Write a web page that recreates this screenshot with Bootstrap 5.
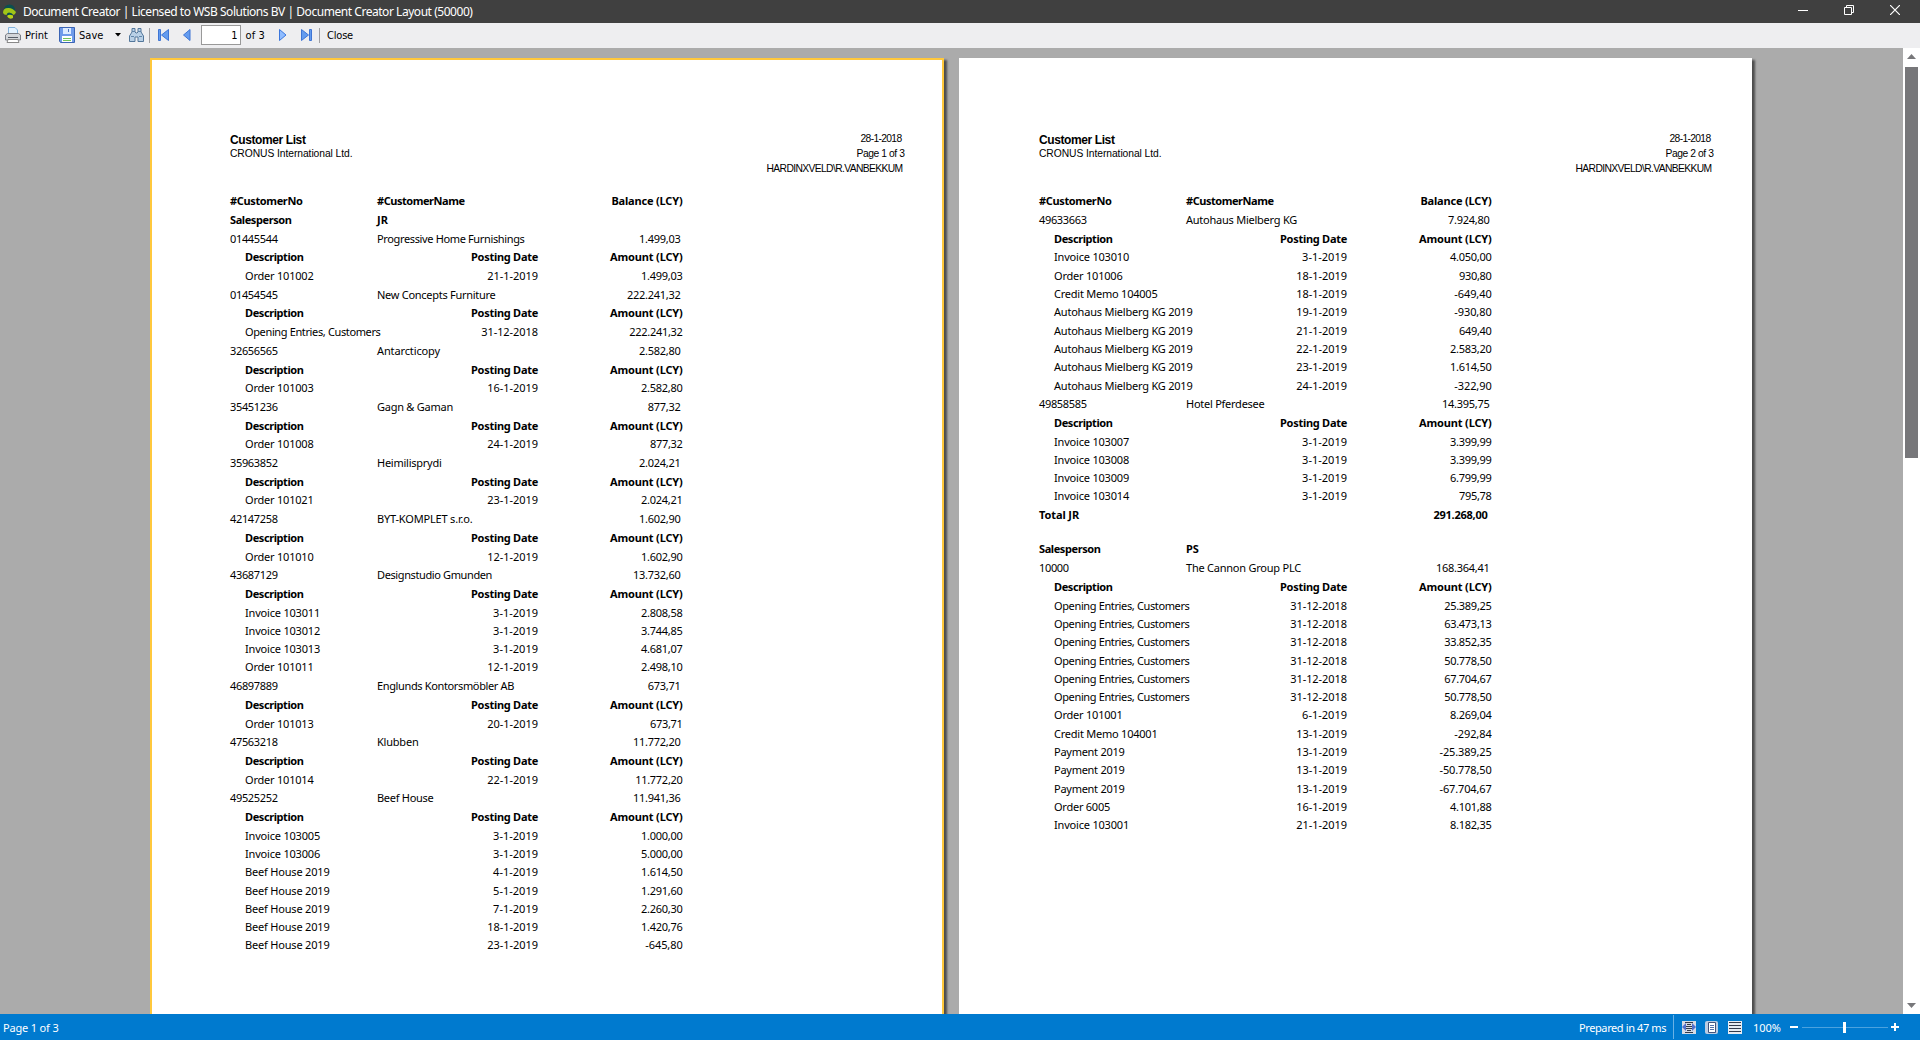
<!DOCTYPE html>
<html lang="en">
<head>
<meta charset="utf-8">
<title>Document Creator</title>
<link href="https://cdn.jsdelivr.net/npm/bootstrap@5.3.0/dist/css/bootstrap.min.css" rel="stylesheet">
<style>
body{height:1040px;width:1920px;font-family:"Noto Sans",sans-serif;color:#000;line-height:1}
svg{display:block;flex:none}
.titlebar{height:23px;background:#404040;color:#fff;font-size:12px;padding-left:3px}
.titlebar .caption-text{margin-left:6px;width:470px;white-space:nowrap}
.win-buttons{gap:36px;padding-right:20px}
.tools{height:25px;background:#eeeef0;font:11px "DejaVu Sans Condensed","DejaVu Sans",sans-serif;padding-left:5px;padding-bottom:1px}
.sep{width:1px;height:15px;background:#a0a0a4}
.page-input{width:40px;height:20px;border:1px solid #999;background:#fff;padding-right:2px}
.ms-a{margin-left:11px}.ms-b{margin-left:8px}.ms-c{margin-left:14px}.ms-d{margin-left:10px}.ms-e{margin-left:5px}.ms-f{margin-left:7px}.ms-g{margin-left:9px}
.workspace{height:966px;background:#ababab}
.pages{padding:10px 0 0 150px;gap:15px}
.sheet{width:794px;background:#fff;box-shadow:3px 2px 2px rgba(0,0,0,.55);padding:73px 0 0}
.sheet.current{border:2px solid #ffc83c;border-bottom:0;padding:71px 0 0}
.sheet.second{width:793px}
.sheet.current .inner{margin-left:-2px}
.inner{width:794px;white-space:nowrap}
.head{height:60.8px;padding-left:80px;font-family:"Liberation Sans",Arial,sans-serif;font-size:10.3px}
.head h1{font-size:12px;font-weight:bold;line-height:14px;margin:2px 0 0}
.head .company{line-height:13px}
.head .meta{width:200px;line-height:15px}
.line{font-size:11px;line-height:18px;height:18.88px;padding-left:80px}
.line .no{width:147px}.line .nm{width:195px}
.line .bal{width:110.500px;padding-right:2px}
.detail,.sub{padding-left:95px}
.detail{height:18.31px}
.c-desc{width:173px}.c-date{width:120px}.c-amt{width:144.600px;overflow:hidden}
.gap-line{height:15.4px}
.vscroll{width:17px;background:#fff;padding:6px 0 6px}
.thumb{width:13px;height:391px;background:#77777a;margin-top:8px}
.status{height:26px;background:#007acf;color:#fff;font-size:11px;padding:0 20px 0 3px}
.status .divider{width:1px;height:24px;background:#69b1e5;margin:0 8px 0 7px}
</style>
</head>
<body class="overflow-hidden d-flex flex-column">
<header class="titlebar d-flex align-items-center justify-content-between">
 <div class="d-flex align-items-center">
  <svg width="14" height="16" viewBox="0 0 14 16"><circle cx="6.500" cy="6" r="5.500" fill="#0b4f50"/><path d="M0 9Q0 4 5 4Q9 3.500 13 8Q12 11 10.500 11Q9 8.500 6 8.500Q4 8.500 3.500 11Q1 11 0 9Z" fill="#a1c517"/><path d="M4 12Q6 10 10 11.500L10 14Q6 16 4 12Z" fill="#b8d418"/></svg>
  <span class="caption-text fit" data-w="449.5">Document Creator | Licensed to WSB Solutions BV | Document Creator Layout (50000)</span>
 </div>
 <div class="win-buttons d-flex align-items-center pb-1">
  <svg width="10" height="10"><path d="M0 5.5H10" stroke="#fff"/></svg>
  <svg width="10" height="10" fill="none" stroke="#fff"><path d="M.5 2.5H7.5V9.5H.5ZM2.5 2V.5H9.5V7.5H8"/></svg>
  <svg width="10" height="10"><path d="M0 0L10 10M10 0L0 10" stroke="#fff" stroke-width="1.2"/></svg>
 </div>
</header>
<nav class="tools d-flex align-items-center">
 <svg width="16" height="16" viewBox="0 0 16 16"><path d="M3.5 8V.5H10L12.500 3V8" fill="#e3f2ff" stroke="#83b3dc"/><path d="M.5 13V8L2.500 6.500H13.500L15.500 8V13Z" fill="#d3d6da" stroke="#7b7f87"/><path d="M3 10.500H13" stroke="#555c66"/><path d="M3 12.500H13L14 15.500H2Z" fill="#fff" stroke="#888"/></svg>
 <span class="fit ms-1" data-w="23">Print</span>
 <svg class="ms-a" width="16" height="16"><path d="M.5 .5H15.500V15.500H1.500L.5 14Z" fill="#6f9bea" stroke="#3b64b4"/><path d="M4 1H12V7H4Z" fill="#dceaff"/><path d="M9.500 2V5" stroke="#4b74c4"/><path d="M3 9H13V15H3Z" fill="#fff"/><path d="M4 11.500H12M4 13.500H12" stroke="#74c45c"/></svg>
 <span class="fit ms-1" data-w="24.500">Save</span>
 <svg class="ms-a" width="6" height="4"><path d="M0 0H6L3 3.500Z"/></svg>
 <svg class="ms-b" width="15" height="14"><path d="M3 .5H6V4L7 5H8L9 4V.5H12V4L14.500 8V13.500H9V9H6V13.500H.5V8L3 4Z" fill="#b9d0e6" stroke="#53779b"/><path d="M2 8.500H5M10 8.500H13M3 3.500H6M9 3.500H12" stroke="#6286a9"/></svg>
 <div class="sep ms-e"></div>
 <svg class="ms-b" width="11" height="12"><path d="M.5 .5H2.500V11.500H.5ZM10.500 .5V11.500L3.500 6Z" fill="#649cef" stroke="#3f75d4"/></svg>
 <svg class="ms-c" width="8" height="12"><path d="M7 .5V11.500L.5 6Z" fill="#649cef" stroke="#3f75d4"/></svg>
 <div class="page-input ms-d d-flex justify-content-end align-items-center">1</div>
 <span class="fit ms-e" data-w="19.500">of 3</span>
 <svg class="ms-c" width="8" height="12"><path d="M.5 .5V11.500L7 6Z" fill="#8fbcff" stroke="#3b76dc"/></svg>
 <svg class="ms-c" width="11" height="12"><path d="M8.500 .5H10.500V11.500H8.500ZM.5 .5V11.500L7.500 6Z" fill="#649cef" stroke="#3f75d4"/></svg>
 <div class="sep ms-f"></div>
 <span class="fit ms-f" data-w="26">Close</span>
</nav>
<main class="workspace d-flex justify-content-between overflow-hidden">
 <div class="pages d-flex" id="pages"></div>
 <div class="vscroll d-flex flex-column align-items-center">
  <svg width="9" height="5"><path d="M0 5L4.500 0L9 5Z" fill="#77777a"/></svg>
  <div class="thumb"></div>
  <svg class="mt-auto" width="9" height="5"><path d="M0 0L4.500 5L9 0Z" fill="#77777a"/></svg>
 </div>
</main>
<footer class="status d-flex align-items-center">
 <span class="fit me-auto" data-w="55.500">Page 1 of 3</span>
 <span class="fit" data-w="87">Prepared in 47 ms</span>
 <div class="divider"></div>
 <svg width="14" height="13"><path d="M0 0H14V13H0Z" fill="#d5dae4"/><path d="M3 1.500H11M5 3.500H9M4 5.500H10M4 7.500H10M5 9.500H9M3 11.500H11" stroke="#333b4c"/><path d="M0 6L4 2V10ZM14 6L10 2V10Z" fill="#5270cc"/></svg>
 <svg class="ms-g" width="14" height="13"><rect width="13" height="13" rx="2" fill="#bccce2"/><path d="M3.500 1.500H10.500V11.500H3.500Z" fill="#fff" stroke="#42547c"/><path d="M5 4.500H9M5 6.500H9M5 8.500H9" stroke="#5470a8"/></svg>
 <svg class="ms-g" width="14" height="13"><path d="M0 0H14V13H0Z" fill="#e8ecf2"/><path d="M1 1.500H13M1 4.500H13M1 7.500H13M1 10.500H13" stroke="#333b4c"/></svg>
 <span class="fit ms-a" data-w="28">100%</span>
 <svg class="ms-g" width="110" height="13"><path d="M0 6H8M101 6H109M105 2V10" stroke="#fff" stroke-width="2"/><path d="M12 6.500H98" stroke="#4ba2df"/><path d="M53 1H56V12H53Z" fill="#fff"/></svg>
</footer>
<script>
const one=[["H","#CustomerNo","#CustomerName","Balance (LCY)"],["S","Salesperson","JR"],
["C","01445544","Progressive Home Furnishings","1.499,03"],["D","Order 101002","21-1-2019","1.499,03"],
["C","01454545","New Concepts Furniture","222.241,32"],["D","Opening Entries, Customers","31-12-2018","222.241,32"],
["C","32656565","Antarcticopy","2.582,80"],["D","Order 101003","16-1-2019","2.582,80"],
["C","35451236","Gagn & Gaman","877,32"],["D","Order 101008","24-1-2019","877,32"],
["C","35963852","Heimilisprydi","2.024,21"],["D","Order 101021","23-1-2019","2.024,21"],
["C","42147258","BYT-KOMPLET s.r.o.","1.602,90"],["D","Order 101010","12-1-2019","1.602,90"],
["C","43687129","Designstudio Gmunden","13.732,60"],["D","Invoice 103011","3-1-2019","2.808,58"],["D","Invoice 103012","3-1-2019","3.744,85"],["D","Invoice 103013","3-1-2019","4.681,07"],["D","Order 101011","12-1-2019","2.498,10"],
["C","46897889","Englunds Kontorsmöbler AB","673,71"],["D","Order 101013","20-1-2019","673,71"],
["C","47563218","Klubben","11.772,20"],["D","Order 101014","22-1-2019","11.772,20"],
["C","49525252","Beef House","11.941,36"],["D","Invoice 103005","3-1-2019","1.000,00"],["D","Invoice 103006","3-1-2019","5.000,00"],["D","Beef House 2019","4-1-2019","1.614,50"],["D","Beef House 2019","5-1-2019","1.291,60"],["D","Beef House 2019","7-1-2019","2.260,30"],["D","Beef House 2019","18-1-2019","1.420,76"],["D","Beef House 2019","23-1-2019","-645,80"]];
const two=[["H","#CustomerNo","#CustomerName","Balance (LCY)"],
["C","49633663","Autohaus Mielberg KG","7.924,80"],["D","Invoice 103010","3-1-2019","4.050,00"],["D","Order 101006","18-1-2019","930,80"],["D","Credit Memo 104005","18-1-2019","-649,40"],["D","Autohaus Mielberg KG 2019","19-1-2019","-930,80"],["D","Autohaus Mielberg KG 2019","21-1-2019","649,40"],["D","Autohaus Mielberg KG 2019","22-1-2019","2.583,20"],["D","Autohaus Mielberg KG 2019","23-1-2019","1.614,50"],["D","Autohaus Mielberg KG 2019","24-1-2019","-322,90"],
["C","49858585","Hotel Pferdesee","14.395,75"],["D","Invoice 103007","3-1-2019","3.399,99"],["D","Invoice 103008","3-1-2019","3.399,99"],["D","Invoice 103009","3-1-2019","6.799,99"],["D","Invoice 103014","3-1-2019","795,78"],
["S","Total JR","","291.268,00"],["G"],["S","Salesperson","PS"],
["C","10000","The Cannon Group PLC","168.364,41"],["D","Opening Entries, Customers","31-12-2018","25.389,25"],["D","Opening Entries, Customers","31-12-2018","63.473,13"],["D","Opening Entries, Customers","31-12-2018","33.852,35"],["D","Opening Entries, Customers","31-12-2018","50.778,50"],["D","Opening Entries, Customers","31-12-2018","67.704,67"],["D","Opening Entries, Customers","31-12-2018","50.778,50"],["D","Order 101001","6-1-2019","8.269,04"],["D","Credit Memo 104001","13-1-2019","-292,84"],["D","Payment 2019","13-1-2019","-25.389,25"],["D","Payment 2019","13-1-2019","-50.778,50"],["D","Payment 2019","13-1-2019","-67.704,67"],["D","Order 6005","16-1-2019","4.101,88"],["D","Invoice 103001","21-1-2019","8.182,35"]];
// Printed widths, in pixels, of the report's captions and names.
const widths={"#CustomerNo":72.5,"#CustomerName":87.5,"Balance (LCY)":71,"Salesperson":61.5,"JR":11,"PS":12.5,"Total JR":40,"291.268,00":54,
"Description":58.5,"Posting Date":67,"Amount (LCY)":72.5,"Progressive Home Furnishings":147.5,"New Concepts Furniture":118.5,"Antarcticopy":63,"Gagn & Gaman":76,"Heimilisprydi":64.5,"BYT-KOMPLET s.r.o.":95.5,"Designstudio Gmunden":115,"Englunds Kontorsmöbler AB":137,"Klubben":41.5,"Beef House":56.5,"Beef House 2019":84.5,"Opening Entries, Customers":135.5,"Autohaus Mielberg KG":111,"Autohaus Mielberg KG 2019":138.5,"Hotel Pferdesee":78.5,"The Cannon Group PLC":115,"Payment 2019":70.5,"Order 6005":56};
function widthOf(t){
 if(widths[t])return widths[t];
 if(t.startsWith("Order "))return 68.5;
 if(t.startsWith("Invoice "))return 75;
 if(t.startsWith("Credit "))return 103.5;
 const digits=t.replace(/\D/g,"").length;
 return digits*5.95+(t.match(/[.,]/g)||[]).length*2.9+(t.match(/-/g)||[]).length*4.6;
}
const cell=(t,c)=>`<div class="${c}">${t?`<span class="fit" data-w="${widthOf(t)}">${t.replace("&","&amp;")}</span>`:""}</div>`;
function line(r){
 const k=r[0];
 if(k==="G")return '<div class="gap-line"></div>';
 if(k==="D")return `<div class="line detail d-flex">${cell(r[1],"c-desc")}${cell(r[2],"c-date text-end")}${cell(r[3],"c-amt text-end")}</div>`;
 const out=`<div class="line d-flex ${k==="C"?"":"fw-bold"}">${cell(r[1],"no")}${cell(r[2],"nm")}${cell(r[3]||"","bal text-end"+(k==="H"?" pe-0":k==="S"?" pe-1":""))}</div>`;
 return out+(k==="C"?`<div class="line sub d-flex fw-bold">${cell("Description","c-desc")}${cell("Posting Date","c-date text-end")}${cell("Amount (LCY)","c-amt text-end")}</div>`:"");
}
const sheet=(rows,n)=>`<section class="sheet ${n===1?"current":"second"}"><div class="inner">
<div class="head d-flex"><div><h1><span class="fit" data-w="75.5">Customer List</span></h1><div class="company"><span class="fit" data-w="122.5">CRONUS International Ltd.</span></div></div>
<div class="meta text-end"><div style="padding-right:3px"><span class="fit" data-w="41">28-1-2018</span></div><div><span class="fit" data-w="48">Page ${n} of 3</span></div><div style="padding-right:2px"><span class="fit" data-w="136">HARDINXVELD\\R.VANBEKKUM</span></div></div></div>
${rows.map(line).join("")}</div></section>`;
document.getElementById("pages").innerHTML=sheet(one,1)+sheet(two,2);
const rng=document.createRange();
document.querySelectorAll(".fit").forEach(e=>{
 e.style.letterSpacing="0";
 rng.selectNodeContents(e);
 const w=rng.getBoundingClientRect().width,n=e.textContent.length;
 e.style.letterSpacing=((e.dataset.w-w)/n).toFixed(3)+"px";
});
document.querySelectorAll(".head").forEach(h=>h.querySelector(".meta").style.marginLeft=(474.5-h.firstElementChild.getBoundingClientRect().width)+"px");
</script>
<script src="https://cdn.jsdelivr.net/npm/bootstrap@5.3.0/dist/js/bootstrap.bundle.min.js"></script>
</body>
</html>
